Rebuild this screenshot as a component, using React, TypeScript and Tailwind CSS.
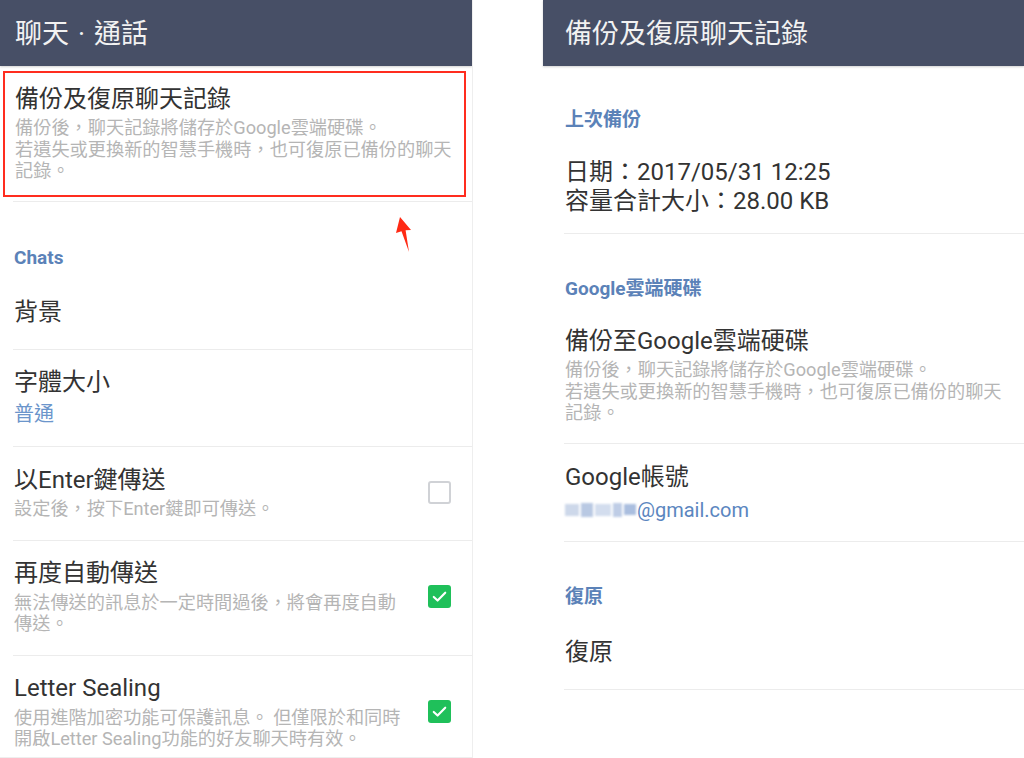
import React from "react";

const font = { fontFamily: "Roboto, 'Noto Sans CJK TC', sans-serif" };

function Checkbox({ checked }: { checked: boolean }) {
  if (!checked) {
    return <div className="shrink-0 w-[23px] h-[23px] rounded-[3px] border-2 border-[#d0d2d6] bg-white" />;
  }
  return (
    <div className="shrink-0 w-[23px] h-[23px] rounded-[3px] bg-[#1fc05a] flex items-center justify-center">
      <svg width="17" height="17" viewBox="0 0 16 16" fill="none">
        <path d="M2.6 8.4 L6.2 11.8 L13.4 4.4" stroke="white" strokeWidth="2" strokeLinecap="round" strokeLinejoin="round" />
      </svg>
    </div>
  );
}

function Sep({ left }: { left: string }) {
  return <div className={`h-px bg-[#ececec] ${left}`} />;
}

export default function App() {
  return (
    <div className="relative w-[1024px] h-[758px] bg-white flex items-start overflow-hidden text-[#333333]" style={font}>
      {/* Left screen - chat settings */}
      <div className="w-[473px] h-[758px] border-r border-b border-[#eeeeee] overflow-hidden shrink-0">
        <div className="h-[66px] bg-[#474f66] pl-[15px] pt-[2px] flex items-center text-[27px] text-[#f2f2f2] shadow-[0_1px_2px_rgba(0,0,0,0.18)]">
          聊天<span className="mx-[9px]">·</span>通話
        </div>

        <div className="mt-[5px] ml-[3px] mr-[6px] h-[126px] border-2 border-[#ff2d1f] pl-[10px] pt-[12px]">
          <div className="text-[24px] leading-[28px]">備份及復原聊天記錄</div>
          <div className="mt-[4px] w-[440px] text-[18.2px] leading-[21.5px] text-[#b5b5b5]">
            備份後，聊天記錄將儲存於Google雲端硬碟。
            <br />
            若遺失或更換新的智慧手機時，也可復原已備份的聊天記錄。
          </div>
        </div>
        <div className="mt-[4px]">
          <Sep left="ml-[13px]" />
        </div>

        <div className="pl-[14px] pt-[44px] text-[19px] leading-[24px] font-bold text-[#5b82b8]">Chats</div>

        <div className="pl-[14px] pt-[28px] pb-[23px] text-[24px] leading-[28px]">背景</div>
        <Sep left="ml-[13px]" />

        <div className="pl-[14px] pt-[18px] pb-[19px]">
          <div className="text-[24px] leading-[28px]">字體大小</div>
          <div className="mt-[5px] text-[20px] leading-[26px] text-[#6b95cb]">普通</div>
        </div>
        <Sep left="ml-[13px]" />

        <div className="pl-[14px] pr-[21px] pt-[19px] pb-[20px] flex items-center justify-between">
          <div className="w-[392px]">
            <div className="text-[24px] leading-[28px]">以Enter鍵傳送</div>
            <div className="mt-[4px] text-[18.2px] leading-[21.5px] text-[#b5b5b5]">設定後，按下Enter鍵即可傳送。</div>
          </div>
          <Checkbox checked={false} />
        </div>
        <Sep left="ml-[13px]" />

        <div className="pl-[14px] pr-[21px] pt-[18px] pb-[20px] flex items-center justify-between">
          <div className="w-[392px]">
            <div className="text-[24px] leading-[28px]">再度自動傳送</div>
            <div className="mt-[5px] text-[18.2px] leading-[21.5px] text-[#b5b5b5]">
              無法傳送的訊息於一定時間過後，將會再度自動傳送。
            </div>
          </div>
          <Checkbox checked={true} />
        </div>
        <Sep left="ml-[13px]" />

        <div className="pl-[14px] pr-[21px] pt-[18px] pb-[20px] flex items-center justify-between">
          <div className="w-[392px]">
            <div className="text-[24px] leading-[28px]">Letter Sealing</div>
            <div className="mt-[5px] text-[18.2px] leading-[21.5px] text-[#b5b5b5]">
              使用進階加密功能可保護訊息。 但僅限於和同時開啟Letter Sealing功能的好友聊天時有效。
            </div>
          </div>
          <Checkbox checked={true} />
        </div>
      </div>

      {/* Right screen - backup & restore */}
      <div className="ml-[70px] flex-1">
        <div className="h-[66px] bg-[#474f66] pl-[22px] pt-[2px] flex items-center text-[27px] text-[#f2f2f2] shadow-[0_1px_2px_rgba(0,0,0,0.18)]">
          備份及復原聊天記錄
        </div>

        <div className="pl-[22px] pt-[42px] text-[19px] leading-[24px] font-bold text-[#5b82b8]">上次備份</div>
        <div className="pl-[22px] mt-[26px] pb-[17px] text-[24px] leading-[29px]">
          <div>日期：2017/05/31 12:25</div>
          <div>容量合計大小：28.00 KB</div>
        </div>
        <Sep left="ml-[21px]" />

        <div className="pl-[22px] pt-[43px] text-[19px] leading-[24px] font-bold text-[#5b82b8]">Google雲端硬碟</div>
        <div className="pl-[22px] pt-[26px] pb-[19px]">
          <div className="text-[24px] leading-[28px]">備份至Google雲端硬碟</div>
          <div className="mt-[4px] w-[440px] text-[18.2px] leading-[21.5px] text-[#b5b5b5]">
            備份後，聊天記錄將儲存於Google雲端硬碟。
            <br />
            若遺失或更換新的智慧手機時，也可復原已備份的聊天記錄。
          </div>
        </div>
        <Sep left="ml-[21px]" />

        <div className="pl-[22px] pt-[19px] pb-[18px]">
          <div className="text-[24px] leading-[28px]">Google帳號</div>
          <div className="mt-[6px] flex items-center text-[20px] leading-[26px] text-[#5b86c0]">
            <span className="flex items-center gap-[2px] blur-[1px] mr-[1px]">
              <span className="w-[14px] h-[12px] bg-[#cdd8ea]" />
              <span className="w-[12px] h-[14px] bg-[#b9c9e3]" />
              <span className="w-[16px] h-[12px] bg-[#d3ddee]" />
              <span className="w-[9px] h-[14px] bg-[#bfcde6]" />
              <span className="w-[12px] h-[11px] bg-[#aabedf]" />
            </span>
            @gmail.com
          </div>
        </div>
        <Sep left="ml-[21px]" />

        <div className="pl-[22px] pt-[43px] text-[19px] leading-[24px] font-bold text-[#5b82b8]">復原</div>
        <div className="pl-[22px] pt-[29px] pb-[23px] text-[24px] leading-[28px]">復原</div>
        <Sep left="ml-[21px]" />
      </div>

      {/* Annotation arrow */}
      <svg className="absolute left-[390px] top-[210px]" width="25" height="46" viewBox="390 210 25 46">
        <polygon points="400,217 396,233 401.5,231.2 409,252 405.6,230.2 411,230" fill="#ff2a14" />
      </svg>
    </div>
  );
}
